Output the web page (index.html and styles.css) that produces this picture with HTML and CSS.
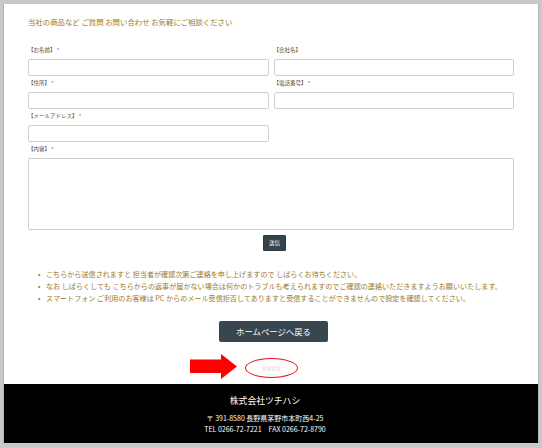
FILE: index.html
```html
<!DOCTYPE html>
<html lang="ja">
<head>
<meta charset="utf-8">
<title>お問い合わせ</title>
<link rel="stylesheet" href="styles.css">
</head>
<body>
<div class="page">
  <main class="content">
    <p class="intro">当社の商品など ご質問 お問い合わせ お気軽にご相談ください</p>
    <form class="form">
      <div class="grid">
        <div class="field"><label class="label">【お名前】 *</label><input class="input" type="text"></div>
        <div class="field"><label class="label">【会社名】</label><input class="input" type="text"></div>
        <div class="field"><label class="label">【住所】 *</label><input class="input" type="text"></div>
        <div class="field"><label class="label">【電話番号】 *</label><input class="input" type="text"></div>
        <div class="field"><label class="label">【メールアドレス】 *</label><input class="input" type="text"></div>
        <div class="field"></div>
        <div class="field full"><label class="label">【内容】 *</label><textarea class="textarea"></textarea></div>
      </div>
      <div class="submit-row"><button class="submit" type="button">送信</button></div>
    </form>
    <ul class="notes">
      <li>こちらから送信されますと 担当者が確認次第ご連絡を申し上げますので しばらくお待ちください。</li>
      <li>なお しばらくしても こちらからの返事が届かない場合は何かのトラブルも考えられますのでご確認の連絡いただきますようお願いいたします。</li>
      <li>スマートフォン ご利用のお客様は PC からのメール受信拒否してありますと受信することができませんので設定を確認してください。</li>
    </ul>
    <div class="back-row"><a class="back-btn" href="#">ホームページへ戻る</a></div>
    <div class="admin-row">
      <svg class="arrow" width="48" height="25" viewBox="0 0 48 25"><polygon points="0,5.5 31,5.5 31,0 47,12.5 31,25 31,19 0,19" fill="#ff0000"/></svg>
      <a class="admin-link" href="#">管理者用</a>
    </div>
  </main>
  <footer class="footer">
    <p class="company">株式会社ツチハシ</p>
    <p class="addr">〒 391-8580 長野県茅野市本町西4-25</p>
    <p class="addr">TEL 0266-72-7221　FAX 0266-72-8790</p>
  </footer>
</div>
</body>
</html>
```
FILE: styles.css
```css
* { box-sizing: border-box; }
html, body { margin: 0; padding: 0; }
body {
  background: #c8c8c8;
  font-family: "Noto Sans CJK JP", "Noto Sans", sans-serif;
}
.page {
  margin: 4px 3px 0;
  background: #fff;
  border-left: 1px solid #b4b4b4;
  border-right: 1px solid #b4b4b4;
}
.content {
  padding: 12px 24px 0;
}
.intro {
  margin: 0 0 17px;
  font-size: 7.4px;
  line-height: 12px;
  color: #9c7a2a;
}
.grid {
  display: grid;
  grid-template-columns: 1fr 1fr;
  column-gap: 5px;
  row-gap: 2px;
}
.field.full { grid-column: 1 / 3; }
.label {
  display: block;
  font-size: 5.5px;
  line-height: 10px;
  margin-bottom: 4px;
  color: #5e4c2c;
}
.input {
  display: block;
  width: 100%;
  height: 17px;
  border: 1px solid #cfcfcf;
  border-radius: 2px;
  background: #fff;
  margin: 0;
}
.textarea {
  display: block;
  width: 100%;
  height: 72px;
  border: 1px solid #cfcfcf;
  border-radius: 2px;
  background: #fff;
  margin: 0;
  resize: none;
}
.submit-row {
  margin-top: 5px;
  display: flex;
  justify-content: center;
  padding-left: 7px;
}
.submit {
  width: 23px;
  height: 16px;
  padding: 0;
  border: 1px solid #2c3a42;
  border-radius: 1px;
  background: #34444d;
  color: #fff;
  font-family: inherit;
  font-size: 5.5px;
  line-height: 14px;
}
.notes {
  margin: 17px 0 0;
  padding: 0 0 0 10px;
  list-style: none;
  font-size: 7.1px;
  line-height: 12px;
  color: #9c7a2a;
}
.notes li::before {
  content: "•";
  display: inline-block;
  width: 8px;
}
.back-row {
  margin-top: 17px;
  display: flex;
  justify-content: center;
  padding-left: 5px;
}
.back-btn {
  display: block;
  width: 109px;
  height: 21px;
  background: #37464f;
  border-radius: 2px;
  color: #fff;
  text-align: center;
  text-decoration: none;
  font-size: 8.4px;
  line-height: 21px;
}
.admin-row {
  position: relative;
  height: 42px;
  padding-top: 16px;
  display: flex;
  justify-content: center;
  align-items: flex-start;
}
.arrow {
  position: absolute;
  left: 162px;
  top: 12px;
}
.admin-link {
  display: block;
  width: 53px;
  height: 20px;
  border: 1.5px solid #ee1111;
  border-radius: 50%;
  color: #d8d8d8;
  text-align: center;
  text-decoration: none;
  font-size: 4.8px;
  line-height: 17px;
}
.footer {
  background: #000;
  color: #fff;
  text-align: center;
  padding: 11px 12px 8px 0;
}
.company {
  margin: 0 0 6px;
  font-size: 8.8px;
  line-height: 12px;
}
.addr {
  margin: 0;
  font-size: 7px;
  line-height: 11px;
}
```
